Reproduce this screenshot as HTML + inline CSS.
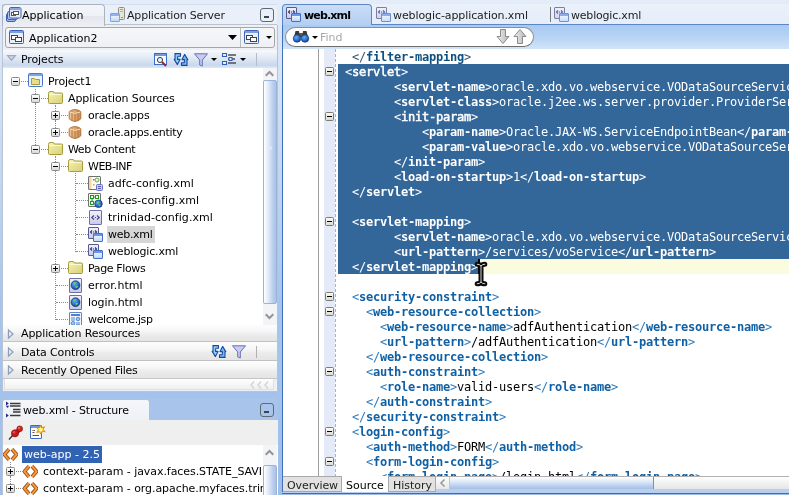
<!DOCTYPE html>
<html>
<head>
<meta charset="utf-8">
<title>web.xml</title>
<style>
html,body{margin:0;padding:0;}
body{width:789px;height:495px;overflow:hidden;position:relative;background:linear-gradient(#e3ecf8 0px,#dbe6f6 50px,#c3d7f2 170px,#a6c5ee 300px,#9fbfea 495px);font-family:"DejaVu Sans","Liberation Sans",sans-serif;font-size:11px;color:#000;}
.abs{position:absolute;}
div,span{box-sizing:border-box;}
svg{position:absolute;overflow:visible;}
.t{position:absolute;white-space:nowrap;line-height:13px;height:13px;}
#code{position:absolute;left:338px;top:49px;margin:0;font-family:"DejaVu Sans Mono","Liberation Mono",monospace;font-size:12px;letter-spacing:-0.2246px;line-height:15px;white-space:pre;color:#000;}
#code b{color:#0f60a4;font-weight:bold;}
#code i{color:#2e7cbe;font-style:normal;}
#code .f b{color:#0e5080;}
#code .f i{color:#34556f;}
#code .s, #code .s b, #code .s i{color:#fff;}
#code b.m{font-weight:normal;-webkit-text-stroke:0.5px #fff;}
.fold{position:absolute;left:325px;width:9px;height:9px;border:1px solid #7d7a70;background:linear-gradient(#fbfaf6,#dedbd0);border-radius:1.5px;}
.fold:after{content:"";position:absolute;left:1px;top:3px;width:5px;height:1px;background:#000;}
.ex{position:absolute;width:9px;height:9px;border:1px solid #8a8a8a;background:linear-gradient(#ffffff,#d8d8d4);border-radius:1.5px;}
.ex:after{content:"";position:absolute;left:1px;top:3px;width:5px;height:1px;background:#000;}
.ex.p:before{content:"";position:absolute;left:3px;top:1px;width:1px;height:5px;background:#000;}
.hd{position:absolute;left:0;top:0;width:1px;height:0;border-top:1px dotted #8c8c8c;}
.vd{position:absolute;width:0;border-left:1px dotted #8c8c8c;}
.acc{position:absolute;left:3px;width:274px;background:linear-gradient(#fdfdfd,#f6f6f6 40%,#ececec 60%,#e4e4e4);}
.minb{position:absolute;width:14px;height:13px;border:1px solid #5f6875;border-radius:3px;}
.minb:after{content:"";position:absolute;left:3px;top:7px;width:5px;height:2px;background:#3c4450;}
</style>
</head>
<body>
<div id="root" style="position:absolute;left:0;top:0;width:789px;height:495px;will-change:transform;">
<svg width="0" height="0" style="left:-10px;top:-10px">
<defs>
<linearGradient id="gFold" x1="0" y1="0" x2="1" y2="1"><stop offset="0" stop-color="#f7f3b4"/><stop offset="1" stop-color="#d6cf78"/></linearGradient>
<linearGradient id="gArr" x1="0" y1="0" x2="1" y2="0"><stop offset="0" stop-color="#f6f6f6"/><stop offset="0.35" stop-color="#dcdcdc"/><stop offset="1" stop-color="#b4b4b4"/></linearGradient>
<linearGradient id="gPage" x1="0" y1="0" x2="0" y2="1"><stop offset="0" stop-color="#f2f2fb"/><stop offset="1" stop-color="#c9c9e6"/></linearGradient>
<linearGradient id="gWin" x1="0" y1="0" x2="0" y2="1"><stop offset="0" stop-color="#ffffff"/><stop offset="1" stop-color="#bcd6f7"/></linearGradient>
<radialGradient id="gGlobe" cx="0.4" cy="0.35" r="0.7"><stop offset="0" stop-color="#5fb0ff"/><stop offset="1" stop-color="#0a3f9e"/></radialGradient>
<linearGradient id="gPkg" x1="0" y1="0" x2="1" y2="0"><stop offset="0" stop-color="#f3c99a"/><stop offset="1" stop-color="#c98a50"/></linearGradient>
<symbol id="folder" viewBox="0 0 15 13">
<path d="M0.5 2.5 Q0.5 0.5 2 0.5 L5 0.5 Q6 0.5 6.5 2 L13.5 2 Q14.5 2 14.5 3 L14.5 11.5 Q14.5 12.5 13.5 12.5 L1.5 12.5 Q0.5 12.5 0.5 11.5 Z" fill="url(#gFold)" stroke="#a89d3c" stroke-width="1"/>
<path d="M1.5 3.5 L13.5 3.5" stroke="#fbf9d4" stroke-width="1" fill="none"/>
</symbol>
<symbol id="project" viewBox="0 0 15 14">
<rect x="0.5" y="0.5" width="14" height="13" rx="1" fill="#eef4fd" stroke="#4a78c8"/>
<rect x="1" y="1" width="13" height="2" fill="#7ea6e6"/>
<path d="M3.5 5.5 L6.5 5.5 L7.2 6.5 L11.5 6.5 L11.5 11.5 L3.5 11.5 Z" fill="#e6de8c" stroke="#a89d3c" stroke-width="1"/>
</symbol>
<symbol id="pkg" viewBox="0 0 14 13">
<path d="M7 0.600 Q10.500 0.800 12.800 2.600 L12.800 9.800 Q10.500 12.200 7 12.400 Q3.500 12.200 1.200 9.800 L1.200 2.600 Q3.500 0.800 7 0.600 Z" fill="url(#gPkg)" stroke="#b07038" stroke-width="1"/>
<path d="M4 2 L4 11.400 M7 3.400 L7 12.200 M10 2 L10 11.400" stroke="#b9773c" stroke-width="1" fill="none"/>
<path d="M1.600 3 Q7 5.800 12.400 3" stroke="#f8dcb8" stroke-width="1" fill="none"/>
</symbol>
<symbol id="xmlfile" viewBox="0 0 13 15">
<rect x="0.5" y="0.5" width="12" height="14" rx="0.5" fill="url(#gPage)" stroke="#6d6fa8"/>
<path d="M5 5.5 L2.8 7.5 L5 9.5 M8 5.5 L10.2 7.5 L8 9.5" stroke="#3a3f96" stroke-width="1.1" fill="none"/>
<rect x="6" y="7" width="1" height="1" fill="#3a3f96"/>
</symbol>
<symbol id="webxml" viewBox="0 0 15 15">
<rect x="0.500" y="0.500" width="10" height="11" rx="0.500" fill="url(#gPage)" stroke="#565a8c"/>
<path d="M4 3.500 L2.500 5 L4 6.500 M7 3.500 L8.500 5 L7 6.500" stroke="#2a2f7a" stroke-width="1.100" fill="none"/>
<rect x="5" y="4.500" width="1" height="1" fill="#2a2f7a"/>
<rect x="5.500" y="6.500" width="9" height="8" rx="0.500" fill="url(#gWin)" stroke="#4270cc"/>
<rect x="6" y="7" width="8" height="2" fill="#6a98e8"/>
</symbol>
<symbol id="htmlfile" viewBox="0 0 13 15">
<rect x="0.5" y="0.5" width="12" height="14" rx="0.5" fill="url(#gPage)" stroke="#6d6fa8"/>
<circle cx="6.5" cy="7.2" r="4.4" fill="url(#gGlobe)" stroke="#15357e" stroke-width="0.8"/>
<path d="M4.2 5 Q5.5 3.6 7.6 4.4 Q7 6 5.6 6.6 Q4.6 6.4 4.2 5 Z M6.4 8 Q8.2 7.4 9.2 8.6 Q8.2 10.4 6.8 10.2 Z" fill="#5fcf5a"/>
</symbol>
<symbol id="jspfile" viewBox="0 0 13 15">
<rect x="0.5" y="0.5" width="12" height="14" rx="0.5" fill="#f4f6fd" stroke="#5f86c8"/>
<rect x="2" y="2" width="9" height="2" fill="#4f7fd6"/>
<rect x="2" y="5.5" width="4" height="1" fill="#4f7fd6"/><rect x="2" y="7.5" width="4" height="1" fill="#4f7fd6"/>
<circle cx="9" cy="7" r="1.8" fill="#8fd0e8" stroke="#3f74c8" stroke-width="0.8"/>
<circle cx="4" cy="11.3" r="1.8" fill="#8fd0e8" stroke="#3f74c8" stroke-width="0.8"/>
<rect x="7" y="10.5" width="4" height="1" fill="#4f7fd6"/><rect x="7" y="12.3" width="4" height="1" fill="#4f7fd6"/>
</symbol>
<symbol id="adfc" viewBox="0 0 15 15">
<rect x="0.5" y="0.5" width="12" height="13" rx="0.5" fill="#fdfdf6" stroke="#707070"/>
<rect x="1" y="1" width="2.5" height="12" fill="#f5d9a0"/>
<circle cx="9" cy="4" r="2" fill="#e8f6e0" stroke="#58b050" stroke-width="1"/>
<rect x="5" y="3" width="1.5" height="1.5" fill="#e05040"/><rect x="5" y="8" width="1.5" height="1.5" fill="#e0a040"/>
<rect x="8.5" y="8.5" width="6" height="6" rx="1" fill="#c8ccf2" stroke="#6c72c8"/>
<path d="M10 10.5 L13 10.5 M10 12.5 L13 12.5" stroke="#5a60b8" stroke-width="1"/>
</symbol>
<symbol id="faces" viewBox="0 0 15 15">
<rect x="0.5" y="0.5" width="12" height="13" rx="0.5" fill="#f2f8ee" stroke="#707070"/>
<rect x="2.500" y="2.500" width="3" height="3" fill="#f4fff0" stroke="#1e9a1e" stroke-width="1"/><path d="M6 4 L8 4 M4 6 L4 8" stroke="#1e9a1e" stroke-width="1"/>
<rect x="7.500" y="2.500" width="3" height="3" fill="#f4fff0" stroke="#1e9a1e" stroke-width="1"/>
<rect x="2.500" y="8.500" width="3" height="3" fill="#f4fff0" stroke="#1e9a1e" stroke-width="1"/>
<circle cx="10.5" cy="10.8" r="3.8" fill="url(#gGlobe)" stroke="#15357e" stroke-width="0.7"/>
<path d="M8.6 9.4 Q10 8 11.4 9 Q10.8 10.4 9.6 10.8 Z M10.6 11.6 Q12 11 12.8 12 Q12 13.4 10.8 13.2 Z" fill="#5fcf5a"/>
</symbol>
<symbol id="elem" viewBox="0 0 15 13">
<path d="M6 1.2 L1.4 6.5 L6 11.8 M9 1.2 L13.6 6.5 L9 11.8" stroke="#9a4a10" stroke-width="3.6" fill="none" stroke-linejoin="miter"/>
<path d="M6 1.2 L1.4 6.5 L6 11.8 M9 1.2 L13.6 6.5 L9 11.8" stroke="#f39a3c" stroke-width="2" fill="none" stroke-linejoin="miter"/>
</symbol>
</defs>
</svg>

<!-- ================= LEFT PANEL (navigator) ================= -->
<!-- tab row background -->
<div class="abs" style="left:2px;top:4px;width:275px;height:21px;background:#e9f0fa;border-top:1px solid #d3deee;border-left:1px solid #b9c4d4;border-bottom:1px solid #bcc2cc;"></div>
<!-- body of panel -->
<div class="abs" style="left:2px;top:25px;width:276px;height:367px;background:#eef0f5;border-left:1px solid #b9c4d4;border-right:1px solid #b5c3d8;border-bottom:1px solid #b5c3d8;"></div>
<!-- active tab -->
<div class="abs" style="left:2px;top:4px;width:103px;height:22px;background:linear-gradient(#f3f5f9,#eef1f6 50%,#e3e6ec 52%,#eceff4);border:1px solid #a9b3c2;border-bottom:none;border-radius:4px 4px 0 0;"></div>
<!-- application icon -->
<svg style="left:6px;top:7px" width="16" height="16" viewBox="0 0 16 16">
<rect x="0.500" y="6.500" width="9" height="8" rx="1.500" fill="#9fb6e6" stroke="#3e62b8"/>
<rect x="1.500" y="4.500" width="10" height="8" rx="1.500" fill="#b4c6ec" stroke="#3e62b8"/>
<rect x="3.500" y="0.500" width="11.500" height="10.500" rx="1.500" fill="#dfe9fb" stroke="#3e62b8"/>
<rect x="4" y="1" width="10.500" height="2" fill="#86a6e4"/>
<rect x="5.500" y="5.500" width="4" height="3" fill="#fff" stroke="#555"/>
<rect x="7.500" y="4.500" width="5" height="3" fill="#fff" stroke="#555"/>
</svg>
<span class="t" style="left:22px;top:9px;">Application</span>
<!-- app server icon -->
<svg style="left:110px;top:7px" width="16" height="16" viewBox="0 0 16 16">
<rect x="8.5" y="0.5" width="6" height="12" rx="1" fill="#e6e6da" stroke="#8c8c80"/>
<rect x="10" y="2" width="3" height="1" fill="#7ac060"/><rect x="10" y="4" width="3" height="1" fill="#b0b0a0"/><rect x="11" y="10" width="2" height="1" fill="#909080"/>
<rect x="0.5" y="6.5" width="9" height="8" rx="0.5" fill="url(#gWin)" stroke="#7fa2e6"/>
<rect x="1" y="7" width="8" height="2" fill="#8fb2f0"/>
</svg>
<span class="t" style="left:127px;top:9px;letter-spacing:-0.18px;color:#1c1c1c;">Application Server</span>
<div class="minb" style="left:260px;top:8px;height:14px;"></div>

<!-- combobox -->
<div class="abs" style="left:5px;top:27px;width:270px;height:21px;border:1px solid #a3a6ab;border-radius:3px;background:linear-gradient(#f6f7f9,#eff0f3);"></div>
<div class="abs" style="left:240px;top:28px;width:1px;height:19px;background:#b9bcc2;"></div>
<svg style="left:9px;top:30px" width="16" height="15" viewBox="0 0 16 15">
<rect x="0.5" y="0.5" width="14" height="13" rx="1" fill="#e8effc" stroke="#3e62b8"/>
<rect x="1" y="1" width="13" height="2" fill="#7c9fe0"/>
<rect x="2.5" y="5.5" width="6" height="4" fill="#fff" stroke="#444"/>
<rect x="6.500" y="7.5" width="6" height="4" fill="#fff" stroke="#444"/>
</svg>
<span class="t" style="left:29px;top:32px;">Application2</span>
<svg style="left:228px;top:35px" width="9" height="5" viewBox="0 0 9 5"><path d="M0 0 L9 0 L4.500 5 Z" fill="#000"/></svg>
<svg style="left:244px;top:30px" width="16" height="15" viewBox="0 0 16 15">
<rect x="0.5" y="0.5" width="14" height="13" rx="1" fill="#e8effc" stroke="#3e62b8"/>
<rect x="1" y="1" width="13" height="2" fill="#7c9fe0"/>
<rect x="2.5" y="5.5" width="6" height="4" fill="#fff" stroke="#444"/>
<rect x="6.500" y="7.5" width="6" height="4" fill="#fff" stroke="#444"/>
</svg>
<svg style="left:266px;top:36px" width="6" height="3" viewBox="0 0 6 3"><path d="M0 0 L6 0 L3 3 Z" fill="#000"/></svg>

<!-- Projects header -->
<div class="abs" style="left:3px;top:50px;width:274px;height:18px;background:linear-gradient(#f7f9fc,#e3ebf6 40%,#c9d8ed 85%,#dfe8f4);"></div>
<svg style="left:7px;top:55px" width="9" height="6" viewBox="0 0 9 6"><path d="M0.600 0.600 L8.400 0.600 L4.500 5.200 Z" fill="#d0d5e0" stroke="#a2aabb" stroke-width="1.200"/></svg>
<span class="t" style="left:21px;top:53px;letter-spacing:-0.12px;">Projects</span>
<svg style="left:154px;top:53px" width="14" height="13" viewBox="0 0 14 13"><rect x="0.500" y="0.500" width="12" height="11" fill="#f4f8ff" stroke="#3e6cc0"/><rect x="1" y="1" width="11" height="2" fill="#6f98e0"/><circle cx="6" cy="7" r="2.600" fill="#dff0ff" stroke="#404040" stroke-width="1"/><path d="M8 9 L12 13" stroke="#a02020" stroke-width="2"/></svg>
<svg style="left:174px;top:53px" width="14" height="13" viewBox="0 0 14 13"><path d="M0.800 0.600 L6.500 0.600 L6.500 3.200 L4.300 3.200 Q3.600 3.200 3.600 4.200 L3.600 6.400 L6 6.400 L3.400 11.600 L0.200 6.400 L1 6.400 L1 2 Q1 0.600 2 0.600 Z" fill="#8ecbf8" stroke="#1a4aa0" stroke-width="1.100" stroke-linejoin="round"/><path d="M13.200 12.400 L7.500 12.400 L7.500 9.800 L9.700 9.800 Q10.400 9.800 10.400 8.800 L10.400 6.600 L8 6.600 L10.600 1.400 L13.800 6.600 L13 6.600 L13 11 Q13 12.400 12 12.400 Z" fill="#6fb8f4" stroke="#1a4aa0" stroke-width="1.100" stroke-linejoin="round"/></svg>
<svg style="left:194px;top:53px" width="14" height="14" viewBox="0 0 14 14"><path d="M0.500 0.800 L13.500 0.800 L8.300 7 L8.300 13 L5.700 12 L5.700 7 Z" fill="#c8ccf0" stroke="#6a70b8" stroke-width="1"/></svg>
<svg style="left:211px;top:58px" width="6" height="3" viewBox="0 0 6 3"><path d="M0 0 L6 0 L3 3 Z" fill="#000"/></svg>
<svg style="left:222px;top:53px" width="15" height="13" viewBox="0 0 15 13"><rect x="0.500" y="0.500" width="4" height="3" fill="#e4f0ff" stroke="#2e5cb8"/><rect x="0.500" y="8.500" width="4" height="3" fill="#e4f0ff" stroke="#2e5cb8"/><path d="M6 2 L14 2 M6 6 L13 6 M6 10 L14 10" stroke="#505050" stroke-width="1.400"/><rect x="7" y="4.500" width="3" height="3" fill="#e4f0ff" stroke="#2e5cb8"/></svg>
<svg style="left:240px;top:58px" width="6" height="3" viewBox="0 0 6 3"><path d="M0 0 L6 0 L3 3 Z" fill="#000"/></svg>
<div class="abs" style="left:256px;top:53px;width:1px;height:13px;background:#b4bccb;"></div>

<!-- tree area -->
<div class="abs" style="left:3px;top:68px;width:260px;height:257px;background:#fff;"></div>
<div class="vd" style="left:35px;top:89px;height:5px;"></div>
<div class="vd" style="left:35px;top:103px;height:42px;"></div>
<div class="vd" style="left:55px;top:105px;height:6px;"></div>
<div class="vd" style="left:55px;top:120px;height:8px;"></div>
<div class="vd" style="left:55px;top:156px;height:6px;"></div>
<div class="vd" style="left:55px;top:171px;height:93px;"></div>
<div class="vd" style="left:55px;top:273px;height:47px;"></div>
<div class="vd" style="left:75px;top:173px;height:79px;"></div>
<div class="ex" style="left:11px;top:77px;"></div>
<div class="hd" style="left:21px;top:81px;width:7px;"></div>
<svg style="left:28px;top:73px" width="15" height="14"><use href="#project" width="15" height="14"/></svg>
<span class="t" style="left:48px;top:75px;letter-spacing:-0.163px;">Project1</span>
<div class="ex" style="left:31px;top:94px;"></div>
<div class="hd" style="left:41px;top:98px;width:7px;"></div>
<svg style="left:48px;top:91px" width="15" height="13"><use href="#folder" width="15" height="13"/></svg>
<span class="t" style="left:68px;top:92px;letter-spacing:-0.095px;">Application Sources</span>
<div class="ex p" style="left:51px;top:111px;"></div>
<div class="hd" style="left:61px;top:115px;width:7px;"></div>
<svg style="left:68px;top:109px" width="14" height="13"><use href="#pkg" width="14" height="13"/></svg>
<span class="t" style="left:88px;top:109px;letter-spacing:-0.218px;">oracle.apps</span>
<div class="ex p" style="left:51px;top:128px;"></div>
<div class="hd" style="left:61px;top:132px;width:7px;"></div>
<svg style="left:68px;top:126px" width="14" height="13"><use href="#pkg" width="14" height="13"/></svg>
<span class="t" style="left:88px;top:126px;letter-spacing:-0.261px;">oracle.apps.entity</span>
<div class="ex" style="left:31px;top:145px;"></div>
<div class="hd" style="left:41px;top:149px;width:7px;"></div>
<svg style="left:48px;top:142px" width="15" height="13"><use href="#folder" width="15" height="13"/></svg>
<span class="t" style="left:68px;top:143px;letter-spacing:-0.364px;">Web Content</span>
<div class="ex" style="left:51px;top:162px;"></div>
<div class="hd" style="left:61px;top:166px;width:7px;"></div>
<svg style="left:68px;top:159px" width="15" height="13"><use href="#folder" width="15" height="13"/></svg>
<span class="t" style="left:88px;top:160px;letter-spacing:-0.486px;">WEB-INF</span>
<div class="hd" style="left:76px;top:183px;width:12px;"></div>
<svg style="left:88px;top:176px" width="15" height="15"><use href="#adfc" width="15" height="15"/></svg>
<span class="t" style="left:108px;top:177px;letter-spacing:0.053px;">adfc-config.xml</span>
<div class="hd" style="left:76px;top:200px;width:12px;"></div>
<svg style="left:88px;top:193px" width="15" height="15"><use href="#faces" width="15" height="15"/></svg>
<span class="t" style="left:108px;top:194px;letter-spacing:0.031px;">faces-config.xml</span>
<div class="hd" style="left:76px;top:217px;width:12px;"></div>
<svg style="left:89px;top:210px" width="13" height="15"><use href="#xmlfile" width="13" height="15"/></svg>
<span class="t" style="left:108px;top:211px;letter-spacing:0.042px;">trinidad-config.xml</span>
<div class="hd" style="left:76px;top:234px;width:12px;"></div>
<svg style="left:88px;top:227px" width="15" height="15"><use href="#webxml" width="15" height="15"/></svg>
<div class="abs" style="left:107px;top:226px;width:48px;height:17px;background:#d6d6d6;"></div>
<span class="t" style="left:108px;top:228px;letter-spacing:-0.286px;">web.xml</span>
<div class="hd" style="left:76px;top:251px;width:12px;"></div>
<svg style="left:88px;top:244px" width="15" height="15"><use href="#webxml" width="15" height="15"/></svg>
<span class="t" style="left:108px;top:245px;letter-spacing:-0.192px;">weblogic.xml</span>
<div class="ex p" style="left:51px;top:264px;"></div>
<div class="hd" style="left:61px;top:268px;width:7px;"></div>
<svg style="left:68px;top:261px" width="15" height="13"><use href="#folder" width="15" height="13"/></svg>
<span class="t" style="left:88px;top:262px;letter-spacing:-0.370px;">Page Flows</span>
<div class="hd" style="left:56px;top:285px;width:12px;"></div>
<svg style="left:69px;top:278px" width="13" height="15"><use href="#htmlfile" width="13" height="15"/></svg>
<span class="t" style="left:88px;top:279px;letter-spacing:0.050px;">error.html</span>
<div class="hd" style="left:56px;top:302px;width:12px;"></div>
<svg style="left:69px;top:295px" width="13" height="15"><use href="#htmlfile" width="13" height="15"/></svg>
<span class="t" style="left:88px;top:296px;letter-spacing:-0.100px;">login.html</span>
<div class="hd" style="left:56px;top:319px;width:12px;"></div>
<svg style="left:69px;top:312px" width="13" height="15"><use href="#jspfile" width="13" height="15"/></svg>
<span class="t" style="left:88px;top:313px;letter-spacing:-0.336px;">welcome.jsp</span>
<!-- vertical scrollbar -->
<div class="abs" style="left:263px;top:68px;width:14px;height:257px;background:#f2f4f8;"></div>
<div class="abs" style="left:263px;top:80px;width:14px;height:224px;border:1px solid #9db3d6;border-radius:2px;background:linear-gradient(90deg,#ffffff,#e6eefa 30%,#b4cbed 80%,#a9c2e8);"></div>
<svg style="left:265px;top:71px" width="9" height="5" viewBox="0 0 9 5"><path d="M0.700 4.700 L4.500 1 L8.300 4.700" stroke="#949494" stroke-width="2" fill="none"/></svg>
<svg style="left:265px;top:314px" width="9" height="5" viewBox="0 0 9 5"><path d="M0.700 0.300 L4.500 4 L8.300 0.300" stroke="#949494" stroke-width="2" fill="none"/></svg>
<div class="abs" style="left:268px;top:146px;width:4px;height:4px;border-radius:2px;background:#dfe9f8;"></div>

<!-- accordion headers -->
<div class="acc" style="top:325px;height:16px;"></div>
<div class="abs" style="left:3px;top:341px;width:274px;height:1px;background:#c2c2c2;"></div>
<div class="acc" style="top:342px;height:18px;"></div>
<div class="abs" style="left:3px;top:360px;width:274px;height:1px;background:#c2c2c2;"></div>
<div class="acc" style="top:361px;height:17px;"></div>
<div class="abs" style="left:3px;top:378px;width:274px;height:1px;background:#c6c6c6;"></div>
<div class="abs" style="left:4px;top:379px;width:270px;height:11px;background:linear-gradient(#ffffff,#f0f0f0);border:1px solid #e0e0e0;border-top:none;"></div>
<svg style="left:8px;top:329px" width="5.500" height="10" viewBox="0 0 6 10"><path d="M0.5 0.5 L5.500 5 L0.5 9.500 Z" fill="#e4eaf4" stroke="#8c9cba" stroke-width="1.300"/></svg>
<svg style="left:8px;top:347px" width="5.500" height="10" viewBox="0 0 6 10"><path d="M0.5 0.5 L5.500 5 L0.5 9.500 Z" fill="#e4eaf4" stroke="#8c9cba" stroke-width="1.300"/></svg>
<svg style="left:8px;top:365px" width="5.500" height="10" viewBox="0 0 6 10"><path d="M0.5 0.5 L5.500 5 L0.5 9.500 Z" fill="#e4eaf4" stroke="#8c9cba" stroke-width="1.300"/></svg>
<span class="t" style="left:21px;top:327px;letter-spacing:-0.1px;">Application Resources</span>
<span class="t" style="left:21px;top:346px;letter-spacing:-0.14px;">Data Controls</span>
<span class="t" style="left:21px;top:364px;letter-spacing:-0.25px;">Recently Opened Files</span>
<svg style="left:212px;top:345px" width="14" height="13" viewBox="0 0 14 13"><path d="M0.800 0.600 L6.500 0.600 L6.500 3.200 L4.300 3.200 Q3.600 3.200 3.600 4.200 L3.600 6.400 L6 6.400 L3.400 11.600 L0.200 6.400 L1 6.400 L1 2 Q1 0.600 2 0.600 Z" fill="#8ecbf8" stroke="#1a4aa0" stroke-width="1.100" stroke-linejoin="round"/><path d="M13.200 12.400 L7.500 12.400 L7.500 9.800 L9.700 9.800 Q10.400 9.800 10.400 8.800 L10.400 6.600 L8 6.600 L10.600 1.400 L13.800 6.600 L13 6.600 L13 11 Q13 12.400 12 12.400 Z" fill="#6fb8f4" stroke="#1a4aa0" stroke-width="1.100" stroke-linejoin="round"/></svg>
<svg style="left:232px;top:345px" width="14" height="14" viewBox="0 0 14 14"><path d="M0.500 0.800 L13.500 0.800 L8.300 7 L8.300 13 L5.700 12 L5.700 7 Z" fill="#c8ccf0" stroke="#6a70b8" stroke-width="1"/></svg>
<div class="abs" style="left:256px;top:346px;width:1px;height:12px;background:#b0b0b0;"></div>
<svg style="left:250px;top:381px" width="22" height="8" viewBox="0 0 22 8"><path d="M4 0.5 L1 4 L4 7.500 M11 0.5 L8 4 L11 7.500 M18 0.5 L15 4 L18 7.500" stroke="#d2d2d2" stroke-width="1.300" fill="none"/></svg>

<!-- ================= STRUCTURE PANEL ================= -->
<div class="abs" style="left:2px;top:398px;width:276px;height:22px;background:#a9c4ea;border-radius:0 4px 0 0;"></div>
<div class="abs" style="left:2px;top:399px;width:148px;height:21px;background:linear-gradient(#f4f6fa,#eef1f6);border:1px solid #b4bfd0;border-bottom:none;border-radius:3px 3px 0 0;"></div>
<div class="abs" style="left:2px;top:420px;width:276px;height:25px;background:#efefef;border-left:1px solid #b9c4d4;"></div>
<div class="abs" style="left:2px;top:445px;width:276px;height:50px;background:#fff;border-left:1px solid #b9c4d4;"></div>
<svg style="left:5px;top:402px" width="16" height="16" viewBox="0 0 16 16">
<path d="M5 1.500 L15.500 1.500 M5 4 L15.500 4 M8 7.500 L15.500 7.500 M8 10 L15.500 10 M5 13.500 L15.500 13.500" stroke="#3a3a3a" stroke-width="1.300"/>
<path d="M1 -0.500 L3.800 1.500 L1 3.500 Z M0.800 3.800 L4.200 3.800 L2.500 6 Z M1 11.500 L3.800 13.500 L1 15.500 Z" fill="#1e2c8a"/>
</svg>
<span class="t" style="left:23px;top:404px;letter-spacing:-0.15px;">web.xml - Structure</span>
<div class="minb" style="left:260px;top:403px;height:14px;"></div>
<!-- pin -->
<svg style="left:8px;top:425px" width="16" height="16" viewBox="0 0 16 16">
<path d="M1 14.500 L5.500 9.500" stroke="#303030" stroke-width="1.300"/>
<path d="M9.500 3.500 L12.500 6.500 L9.500 9.500 L6.500 6.500 Z" fill="#b81414"/>
<circle cx="7" cy="8.300" r="3.600" fill="#c81818" stroke="#7a0c0c" stroke-width="0.600"/>
<circle cx="11.700" cy="3.800" r="2.900" fill="#d42020" stroke="#7a0c0c" stroke-width="0.600"/>
<circle cx="11" cy="3" r="1" fill="#f07070"/>
<circle cx="6" cy="7.300" r="1.200" fill="#e85050"/>
</svg>
<!-- new view -->
<svg style="left:30px;top:425px" width="16" height="15" viewBox="0 0 16 15">
<rect x="0.500" y="0.500" width="11" height="13" rx="0.500" fill="#fdfdfd" stroke="#3e6cc0"/>
<rect x="1" y="1" width="10" height="2" fill="#6f98e0"/>
<path d="M2.500 5.500 L5 5.500 M2.500 7.500 L4.500 7.500 M2.500 10.500 L9 10.500" stroke="#555" stroke-width="1"/>
<path d="M2.500 5.500 L4 5.500" stroke="#d08030" stroke-width="1"/>
<path d="M10.500 0 L11.600 2.600 L14.600 1.800 L13 4.500 L15.200 6.600 L12.200 6.600 L11 9.400 L9.600 6.800 L6.600 7.400 L8.400 4.800 L6.400 2.400 L9.400 2.600 Z" fill="#ffd83c" stroke="#d07a10" stroke-width="0.800"/>
<circle cx="10.700" cy="4.600" r="1.600" fill="#fff6a0"/>
</svg>
<div class="abs" style="left:3px;top:445px;width:260px;height:50px;overflow:hidden;"><div class="abs" style="left:-3px;top:-445px;width:300px;height:500px;"><div class="abs" style="left:22px;top:446px;width:80px;height:17px;background:#3163b5;"></div>
<svg style="left:3px;top:448px" width="15" height="13"><use href="#elem" width="15" height="13"/></svg>
<span class="t" style="left:24px;top:448px;color:#fff;">web-app - 2.5</span>
<div class="vd" style="left:10px;top:462px;height:5px;"></div>
<div class="vd" style="left:10px;top:476px;height:8px;"></div>
<div class="ex p" style="left:6px;top:467px;"></div>
<div class="hd" style="left:16px;top:471px;width:7px;"></div>
<svg style="left:23px;top:465px" width="15" height="13"><use href="#elem" width="15" height="13"/></svg>
<span class="t" style="left:43px;top:465px;letter-spacing:-0.06px;">context-param - javax.faces.STATE_SAVI</span>
<div class="ex p" style="left:6px;top:484px;"></div>
<div class="hd" style="left:16px;top:488px;width:7px;"></div>
<svg style="left:23px;top:482px" width="15" height="13"><use href="#elem" width="15" height="13"/></svg>
<span class="t" style="left:43px;top:482px;letter-spacing:-0.06px;">context-param - org.apache.myfaces.trin</span></div></div>
<!-- structure scrollbar -->
<div class="abs" style="left:263px;top:445px;width:14px;height:50px;background:#f2f4f8;"></div>
<svg style="left:265px;top:450px" width="9" height="5" viewBox="0 0 9 5"><path d="M0.700 4.700 L4.500 1 L8.300 4.700" stroke="#949494" stroke-width="2" fill="none"/></svg>
<div class="abs" style="left:263px;top:465px;width:14px;height:40px;border:1px solid #9db3d6;border-radius:2px;background:linear-gradient(90deg,#ffffff,#e6eefa 30%,#b4cbed 80%,#a9c2e8);"></div>

<!-- ================= EDITOR ================= -->
<!-- editor tab strip -->
<div class="abs" style="left:282px;top:4px;width:507px;height:21px;background:linear-gradient(#eaf1fb,#e4edf9);border-bottom:1px solid #5d86c4;"></div>
<div class="abs" style="left:282px;top:4px;width:90px;height:22px;background:linear-gradient(#cbddf6,#b2cef3);border:1px solid #5d86c4;border-bottom:none;border-radius:4px 4px 0 0;"></div>
<svg style="left:286px;top:7px" width="15" height="15"><use href="#webxml" width="15" height="15"/></svg>
<span class="t" style="left:304px;top:9px;font-weight:bold;letter-spacing:-0.85px;">web.xml</span>
<svg style="left:376px;top:7px" width="15" height="15" opacity="0.75"><use href="#webxml" width="15" height="15"/></svg>
<span class="t" style="left:393px;top:9px;letter-spacing:-0.09px;color:#1c1c1c;">weblogic-application.xml</span>
<div class="abs" style="left:550px;top:7px;width:1px;height:15px;background:#7a7a7a;"></div>
<svg style="left:554px;top:7px" width="15" height="15" opacity="0.75"><use href="#webxml" width="15" height="15"/></svg>
<span class="t" style="left:571px;top:9px;color:#1c1c1c;letter-spacing:-0.2px;">weblogic.xml</span>
<!-- editor left border -->
<div class="abs" style="left:282px;top:25px;width:1px;height:470px;background:#3f70bc;"></div>
<!-- search band -->
<div class="abs" style="left:283px;top:25px;width:506px;height:24px;background:linear-gradient(#a8c9f2,#b6d3f5 50%,#d2e4f9);"></div>
<div class="abs" style="left:285px;top:27px;width:249px;height:20px;background:#fff;border:1px solid #8e8e8e;border-radius:10px;border-bottom-color:#6e6e6e;"></div>
<!-- binoculars -->
<svg style="left:293px;top:30px" width="16" height="13" viewBox="0 0 16 13">
<path d="M2.500 1 L6 1 L6.500 5 L9.500 5 L10 1 L13.500 1 L15 7 L1 7 Z" fill="#3a3a3a"/>
<rect x="6" y="3" width="4" height="3" fill="#555"/>
<circle cx="4" cy="8.500" r="3.800" fill="url(#gGlobe)" stroke="#10306e" stroke-width="0.6"/>
<circle cx="12" cy="8.500" r="3.800" fill="url(#gGlobe)" stroke="#10306e" stroke-width="0.6"/>
</svg>
<svg style="left:312px;top:36px" width="6" height="3" viewBox="0 0 6 3"><path d="M0 0 L6 0 L3 3 Z" fill="#000"/></svg>
<span class="t" style="left:320px;top:31px;color:#a8a8a8;">Find</span>
<!-- down / up arrows -->
<svg style="left:496px;top:29px" width="14" height="16" viewBox="0 0 14 16"><path d="M4.500 0.5 L9.500 0.5 L9.500 7.500 L13 7.500 L7 14.500 L1 7.500 L4.500 7.500 Z" fill="url(#gArr)" stroke="#8a8a8a" stroke-width="1"/></svg>
<svg style="left:513px;top:29px" width="14" height="16" viewBox="0 0 14 16"><path d="M4.500 14.500 L9.500 14.500 L9.500 7.500 L13 7.500 L7 0.5 L1 7.500 L4.500 7.500 Z" fill="url(#gArr)" stroke="#8a8a8a" stroke-width="1"/></svg>
<!-- editor text area -->
<div class="abs" style="left:283px;top:49px;width:506px;height:428px;background:#fff;"></div>
<div class="abs" style="left:318px;top:49px;width:1px;height:428px;background:#9c9f9c;"></div>
<div class="abs" style="left:324px;top:49px;width:11px;height:428px;background:#e4eaf7;"></div>
<div class="abs" style="left:335px;top:49px;width:0;height:428px;border-left:1px dashed #b8b0a8;"></div>
<!-- selection -->
<div class="abs" style="left:338px;top:64px;width:451px;height:195px;background:#336699;"></div>
<div class="abs" style="left:338px;top:259px;width:141px;height:15px;background:#336699;"></div>
<div class="abs" style="left:479px;top:259px;width:310px;height:15px;background:#fbfbdf;"></div>
<div class="abs" style="left:283px;top:49px;width:506px;height:428px;overflow:hidden;">
<pre id="code" style="left:55px;top:1px;"><span class="f">  <i>&lt;/</i><b>filter-mapping</b><i>&gt;</i></span>
<span class="s"> <i>&lt;</i><b class="m">servlet</b><i>&gt;</i>
        <i>&lt;</i><b>servlet-name</b><i>&gt;</i>oracle.xdo.vo.webservice.VODataSourceService<i>&lt;/</i><b>servlet-name</b><i>&gt;</i>
        <i>&lt;</i><b>servlet-class</b><i>&gt;</i>oracle.j2ee.ws.server.provider.ProviderServlet<i>&lt;/</i><b>servlet-class</b><i>&gt;</i>
        <i>&lt;</i><b class="m">init-param</b><i>&gt;</i>
            <i>&lt;</i><b>param-name</b><i>&gt;</i>Oracle.JAX-WS.ServiceEndpointBean<i>&lt;/</i><b>param-name</b><i>&gt;</i>
            <i>&lt;</i><b>param-value</b><i>&gt;</i>oracle.xdo.vo.webservice.VODataSourceService<i>&lt;/</i><b>param-value</b><i>&gt;</i>
        <i>&lt;/</i><b>init-param</b><i>&gt;</i>
        <i>&lt;</i><b>load-on-startup</b><i>&gt;</i>1<i>&lt;/</i><b>load-on-startup</b><i>&gt;</i>
  <i>&lt;/</i><b>servlet</b><i>&gt;</i>

  <i>&lt;</i><b>servlet-mapping</b><i>&gt;</i>
        <i>&lt;</i><b>servlet-name</b><i>&gt;</i>oracle.xdo.vo.webservice.VODataSourceService<i>&lt;/</i><b>servlet-name</b><i>&gt;</i>
        <i>&lt;</i><b>url-pattern</b><i>&gt;</i>/services/voService<i>&lt;/</i><b>url-pattern</b><i>&gt;</i>
  <i>&lt;/</i><b>servlet-mapping</b><i>&gt;</i></span>

  <i>&lt;</i><b>security-constraint</b><i>&gt;</i>
    <i>&lt;</i><b>web-resource-collection</b><i>&gt;</i>
      <i>&lt;</i><b>web-resource-name</b><i>&gt;</i>adfAuthentication<i>&lt;/</i><b>web-resource-name</b><i>&gt;</i>
      <i>&lt;</i><b>url-pattern</b><i>&gt;</i>/adfAuthentication<i>&lt;/</i><b>url-pattern</b><i>&gt;</i>
    <i>&lt;/</i><b>web-resource-collection</b><i>&gt;</i>
    <i>&lt;</i><b>auth-constraint</b><i>&gt;</i>
      <i>&lt;</i><b>role-name</b><i>&gt;</i>valid-users<i>&lt;/</i><b>role-name</b><i>&gt;</i>
    <i>&lt;/</i><b>auth-constraint</b><i>&gt;</i>
  <i>&lt;/</i><b>security-constraint</b><i>&gt;</i>
  <i>&lt;</i><b>login-config</b><i>&gt;</i>
    <i>&lt;</i><b>auth-method</b><i>&gt;</i>FORM<i>&lt;/</i><b>auth-method</b><i>&gt;</i>
    <i>&lt;</i><b>form-login-config</b><i>&gt;</i>
      <i>&lt;</i><b>form-login-page</b><i>&gt;</i>/login.html<i>&lt;/</i><b>form-login-page</b><i>&gt;</i></pre>
</div>
<div class="fold" style="top:67px"></div>
<div class="fold" style="top:112px"></div>
<div class="fold" style="top:217px"></div>
<div class="fold" style="top:292px"></div>
<div class="fold" style="top:307px"></div>
<div class="fold" style="top:367px"></div>
<div class="fold" style="top:427px"></div>
<div class="fold" style="top:457px"></div>
<!-- I-beam cursor -->
<div class="abs" style="left:478px;top:259px;width:2px;height:15px;background:#000;"></div>
<svg style="left:475px;top:262px" width="12" height="24" viewBox="0 0 12 24">
<path d="M2.200 2.200 Q4.800 2.200 6 4 Q7.200 2.200 9.800 2.200 M2.200 21.800 Q4.800 21.800 6 20 Q7.200 21.800 9.800 21.800 M6 4 L6 20" stroke="#0a0a0a" stroke-width="5" fill="none" stroke-linecap="round"/>
<path d="M2.200 2.200 Q4.800 2.200 6 4 Q7.200 2.200 9.800 2.200 M2.200 21.800 Q4.800 21.800 6 20 Q7.200 21.800 9.800 21.800 M6 4 L6 20" stroke="#e8e8e8" stroke-width="0.900" fill="none" stroke-linecap="round"/>
</svg>

<!-- bottom tabs + h scrollbar -->
<div class="abs" style="left:283px;top:476px;width:506px;height:16px;background:#e4e4e4;border-top:1px solid #b0b0b0;"></div>
<div class="abs" style="left:283px;top:476px;width:59px;height:16px;background:#e2e2e2;border:1px solid #a8a8a8;border-left:none;"></div>
<div class="abs" style="left:342px;top:476px;width:46px;height:16px;background:#fff;"></div>
<div class="abs" style="left:388px;top:476px;width:48px;height:16px;background:#e2e2e2;border:1px solid #a8a8a8;"></div>
<span class="t" style="left:287px;top:479px;color:#222;letter-spacing:-0.1px;">Overview</span>
<span class="t" style="left:346px;top:479px;">Source</span>
<span class="t" style="left:393px;top:479px;color:#222;">History</span>
<div class="abs" style="left:436px;top:477px;width:353px;height:12px;background:linear-gradient(#ffffff,#f2f2f2 50%,#e6e6e6);"></div>
<svg style="left:440px;top:479px" width="5" height="8" viewBox="0 0 5 8"><path d="M4.500 0.5 L1 4 L4.500 7.500" stroke="#9a9a9a" stroke-width="1.600" fill="none"/></svg>
<div class="abs" style="left:449px;top:477px;width:205px;height:12px;background:linear-gradient(#ffffff,#e6eefa 30%,#b4cbed 80%,#a5bfe6);border-right:1px solid #8e8e8e;border-left:1px solid #b9c8e0;"></div>
<div class="abs" style="left:436px;top:489px;width:353px;height:4px;background:#b9cff0;"></div>
<div class="abs" style="left:282px;top:492px;width:507px;height:1px;background:#b9cff0;"></div>
<div class="abs" style="left:282px;top:493px;width:507px;height:1px;background:#3d6cb5;"></div>
<div class="abs" style="left:282px;top:494px;width:507px;height:1px;background:#9fbde8;"></div>
</div>
</body>
</html>
